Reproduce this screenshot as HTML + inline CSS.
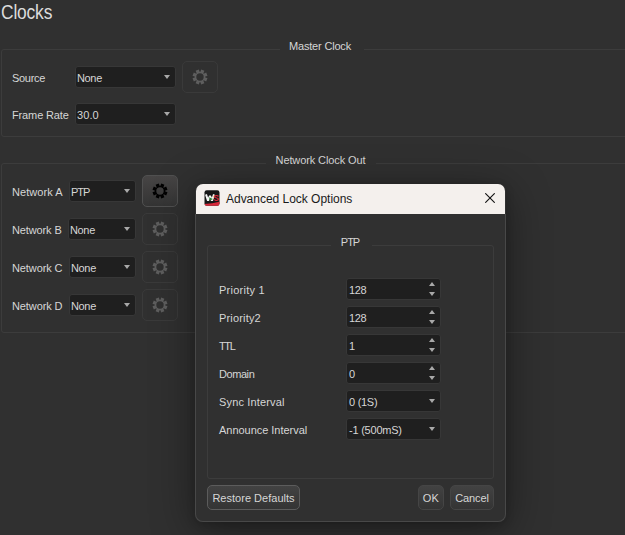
<!DOCTYPE html>
<html><head><meta charset="utf-8">
<style>
html,body{margin:0;padding:0;}
body{width:625px;height:535px;overflow:hidden;background:#303030;position:relative;font-family:"Liberation Sans",sans-serif;font-size:11px;color:#d6d6d6;}
.t{position:absolute;white-space:pre;line-height:11px;letter-spacing:-0.15px;}
.grp{position:absolute;border:1px solid #3c3c3c;border-radius:3px;box-sizing:border-box;}
.gt{position:absolute;background:#303030;text-align:center;line-height:11px;letter-spacing:-0.15px;white-space:pre;}
.cb{position:absolute;background:#1f1f1f;border:1px solid #373737;border-radius:3px;box-sizing:border-box;}
.cb .v{position:absolute;left:1px;top:6px;line-height:11px;white-space:pre;letter-spacing:-0.15px;}
.arr{position:absolute;width:0;height:0;border-left:3.8px solid transparent;border-right:3.8px solid transparent;border-top:4.5px solid #a9a9a9;}
.up{position:absolute;width:0;height:0;border-left:3.8px solid transparent;border-right:3.8px solid transparent;border-bottom:4.5px solid #a9a9a9;}
.dn{position:absolute;width:0;height:0;border-left:3.8px solid transparent;border-right:3.8px solid transparent;border-top:4.5px solid #a9a9a9;}
.gb{position:absolute;width:36px;height:32px;box-sizing:border-box;border:1px solid #3a3a3a;border-radius:5px;background:#303030;}
.gb.act{border-color:#505050;background:linear-gradient(#474545,#343434);}
.gb svg{position:absolute;left:9px;top:7px;}
.btn{position:absolute;box-sizing:border-box;border:1px solid #454545;border-radius:5px;background:linear-gradient(#424242,#343434);text-align:center;line-height:24px;}
</style></head><body>
<svg width="0" height="0" style="position:absolute"><defs><path id="gear" fill-rule="evenodd" d="M8.23,3.01 L9.26,0.51 L12.40,1.81 L11.37,4.31 L11.69,4.63 L14.19,3.60 L15.49,6.74 L12.99,7.77 L12.99,8.23 L15.49,9.26 L14.19,12.40 L11.69,11.37 L11.37,11.69 L12.40,14.19 L9.26,15.49 L8.23,12.99 L7.77,12.99 L6.74,15.49 L3.60,14.19 L4.63,11.69 L4.31,11.37 L1.81,12.40 L0.51,9.26 L3.01,8.23 L3.01,7.77 L0.51,6.74 L1.81,3.60 L4.31,4.63 L4.63,4.31 L3.60,1.81 L6.74,0.51 L7.77,3.01 Z M11.70,8 A3.7,3.7 0 1 0 4.30,8 A3.7,3.7 0 1 0 11.70,8 Z"/></defs></svg>
<div class="t" style="left:1px;top:2px;font-size:20px;line-height:20px;letter-spacing:-0.2px;transform:scaleX(0.87);transform-origin:0 0;color:#dcdcdc;">Clocks</div>
<div class="grp" style="left:1px;top:49px;width:700px;height:88px;"></div>
<div class="gt" style="left:280px;width:84px;top:41px;letter-spacing:-0.19px;text-indent:-4px;">Master Clock</div>
<div class="t" style="left:12px;top:73px;letter-spacing:-0.3px;">Source</div>
<div class="cb" style="left:75px;top:66px;width:101px;height:22px;"><span class="v" style="left:1px;letter-spacing:-0.35px">None</span><div class="arr" style="left:88px;top:8px;"></div></div>
<div class="gb" style="left:182px;top:61px;"><svg width="16" height="16" viewBox="0 0 16 16"><use href="#gear" fill="#5e5e5e"/></svg></div>
<div class="t" style="left:12px;top:110px;letter-spacing:-0.13px;">Frame Rate</div>
<div class="cb" style="left:75px;top:103px;width:101px;height:22px;"><span class="v" style="left:1px;letter-spacing:0.1px">30.0</span><div class="arr" style="left:88px;top:8px;"></div></div>
<div class="grp" style="left:1px;top:163px;width:700px;height:170px;"></div>
<div class="gt" style="left:266px;width:110px;top:155px;letter-spacing:-0.11px;text-indent:-1px;">Network Clock Out</div>
<div class="t" style="left:12px;top:187px;letter-spacing:0.05px;">Network A</div>
<div class="cb" style="left:69px;top:180px;width:67px;height:22px;"><span class="v" style="left:1px;letter-spacing:-1.0px">PTP</span><div class="arr" style="left:54px;top:8px;"></div></div>
<div class="gb act" style="left:142px;top:175px;"><svg width="16" height="16" viewBox="0 0 16 16"><use href="#gear" fill="#000"/></svg></div>
<div class="t" style="left:12px;top:225px;letter-spacing:-0.12px;">Network B</div>
<div class="cb" style="left:68px;top:218px;width:68px;height:22px;"><span class="v" style="left:1px;letter-spacing:-0.35px">None</span><div class="arr" style="left:55px;top:8px;"></div></div>
<div class="gb" style="left:142px;top:213px;"><svg width="16" height="16" viewBox="0 0 16 16"><use href="#gear" fill="#5e5e5e"/></svg></div>
<div class="t" style="left:12px;top:263px;letter-spacing:-0.1px;">Network C</div>
<div class="cb" style="left:69px;top:256px;width:67px;height:22px;"><span class="v" style="left:1px;letter-spacing:-0.35px">None</span><div class="arr" style="left:54px;top:8px;"></div></div>
<div class="gb" style="left:142px;top:251px;"><svg width="16" height="16" viewBox="0 0 16 16"><use href="#gear" fill="#5e5e5e"/></svg></div>
<div class="t" style="left:12px;top:301px;letter-spacing:-0.1px;">Network D</div>
<div class="cb" style="left:69px;top:294px;width:67px;height:22px;"><span class="v" style="left:1px;letter-spacing:-0.35px">None</span><div class="arr" style="left:54px;top:8px;"></div></div>
<div class="gb" style="left:142px;top:289px;"><svg width="16" height="16" viewBox="0 0 16 16"><use href="#gear" fill="#5e5e5e"/></svg></div>
<div style="position:absolute;left:195px;top:184px;width:311px;height:338px;border-radius:7px;box-shadow:0 8px 44px rgba(0,0,0,0.42),0 2px 8px rgba(0,0,0,0.18);"></div>
<div style="position:absolute;left:196px;top:184px;width:309px;height:30px;background:#f4f0ed;border-radius:7px 7px 0 0;"></div>
<div style="position:absolute;left:195px;top:214px;width:311px;height:308px;background:#303030;border:1px solid #484848;border-top:none;border-radius:0 0 8px 8px;box-sizing:border-box;"></div>
<svg style="position:absolute;left:204px;top:190px;" width="16" height="16" viewBox="0 0 16 16">
<defs><clipPath id="ic"><rect x="0.5" y="0.3" width="15" height="15.4" rx="2.2"/></clipPath></defs>
<g clip-path="url(#ic)">
<rect x="0" y="0" width="16" height="16" fill="#161616"/>
<path d="M0,14 Q9,13.8 16,11.4 L16,16 L0,16 Z" fill="#d8293a"/>
<polyline points="2,4.4 4,10.6 6,5.8 8,10.6 10,4.4" fill="none" stroke="#f4f4f4" stroke-width="2" stroke-linejoin="bevel"/>
<path d="M5.2,7.2 L8.8,8.9 L5.6,11 Z" fill="#2e7d32"/>
<text x="9.2" y="10.6" font-family="Liberation Sans" font-weight="bold" font-size="8.6" fill="#d8293a">S</text>
</g></svg>
<div class="t" style="left:226px;top:193px;font-size:12px;line-height:12px;letter-spacing:-0.02px;color:#1a1a1a;">Advanced Lock Options</div>
<svg style="position:absolute;left:485px;top:193px;" width="10" height="10" viewBox="0 0 10 10"><path d="M0.3,0.3 L9.7,9.7 M9.7,0.3 L0.3,9.7" stroke="#111" stroke-width="1.1"/></svg>
<div class="grp" style="left:207px;top:245px;width:287px;height:234px;"></div>
<div class="gt" style="left:331px;width:41px;top:237px;letter-spacing:-1px;text-indent:-3px;">PTP</div>
<div class="t" style="left:219px;top:285px;letter-spacing:0.25px;">Priority 1</div>
<div class="t" style="left:219px;top:313px;letter-spacing:0.17px;">Priority2</div>
<div class="t" style="left:219px;top:341px;letter-spacing:-1.4px;">TTL</div>
<div class="t" style="left:219px;top:369px;letter-spacing:-0.43px;">Domain</div>
<div class="t" style="left:219px;top:397px;letter-spacing:0.15px;">Sync Interval</div>
<div class="t" style="left:219px;top:425px;letter-spacing:-0.03px;">Announce Interval</div>
<div class="cb" style="left:346px;top:278px;width:95px;height:22px;"><span class="v" style="left:2px;letter-spacing:-0.35px">128</span><div class="up" style="left:82px;top:3px;"></div><div class="dn" style="left:82px;top:13px;"></div></div>
<div class="cb" style="left:346px;top:306px;width:95px;height:22px;"><span class="v" style="left:2px;letter-spacing:-0.35px">128</span><div class="up" style="left:82px;top:3px;"></div><div class="dn" style="left:82px;top:13px;"></div></div>
<div class="cb" style="left:346px;top:334px;width:95px;height:22px;"><span class="v" style="left:2px;letter-spacing:-0.15px">1</span><div class="up" style="left:82px;top:3px;"></div><div class="dn" style="left:82px;top:13px;"></div></div>
<div class="cb" style="left:346px;top:362px;width:95px;height:22px;"><span class="v" style="left:2px;letter-spacing:-0.15px">0</span><div class="up" style="left:82px;top:3px;"></div><div class="dn" style="left:82px;top:13px;"></div></div>
<div class="cb" style="left:346px;top:390px;width:95px;height:22px;"><span class="v" style="left:2px;letter-spacing:-0.27px">0 (1S)</span><div class="arr" style="left:82px;top:8px;"></div></div>
<div class="cb" style="left:346px;top:418px;width:95px;height:22px;"><span class="v" style="left:2px;letter-spacing:-0.22px">-1 (500mS)</span><div class="arr" style="left:82px;top:8px;"></div></div>
<div class="btn" style="left:207px;top:485px;width:93px;height:25px;border-color:#5c5c5c;letter-spacing:0.02px;">Restore Defaults</div>
<div class="btn" style="left:418px;top:485px;width:26px;height:25px;letter-spacing:0.25px;">OK</div>
<div class="btn" style="left:450px;top:485px;width:44px;height:25px;letter-spacing:-0.15px;">Cancel</div>
</body></html>
